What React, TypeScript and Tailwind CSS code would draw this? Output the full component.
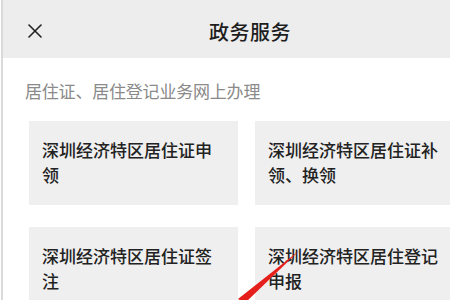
import { X } from 'lucide-react';

const services = [
  '深圳经济特区居住证申领',
  '深圳经济特区居住证补领、换领',
  '深圳经济特区居住证签注',
  '深圳经济特区居住登记申报',
];

export default function App() {
  return (
    <div
      className="relative w-[450px] h-[300px] overflow-hidden bg-white"
      style={{ fontFamily: '"Noto Sans CJK SC", "Noto Sans", sans-serif' }}
    >
      <div className="ml-px w-[496px] h-full border-l-2 border-[#dadada]">
        {/* header */}
        <div className="relative h-[58px] bg-[#ededed] flex items-center justify-center">
          <X
            className="absolute left-[20px] top-[19px] text-[#222]"
            size={24}
            strokeWidth={1.6}
          />
          <h1 className="mt-[6px] text-[20px] font-medium text-[#1d1d1d] tracking-[0.5px]">政务服务</h1>
        </div>

        {/* subtitle */}
        <p className="pl-[22px] pt-[20px] text-[17px] leading-[26px] text-[#8a8a8a] tracking-[-0.2px]">
          居住证、居住登记业务网上办理
        </p>

        {/* cards */}
        <div className="grid grid-cols-[209px_209px] gap-x-[17px] gap-y-[22px] pl-[26px] pt-[17px]">
          {services.map((s) => (
            <div
              key={s}
              className="h-[84px] bg-[#efefef] px-[13px] pt-[16px] text-[17px] leading-[25px] font-medium text-[#222]"
            >
              {s}
            </div>
          ))}
        </div>
      </div>

      {/* red annotation arrow */}
      <svg className="absolute left-0 top-0 pointer-events-none" width="450" height="300">
        <polygon points="300,250 245,303 238,299" fill="#e5201c" />
      </svg>
    </div>
  );
}
